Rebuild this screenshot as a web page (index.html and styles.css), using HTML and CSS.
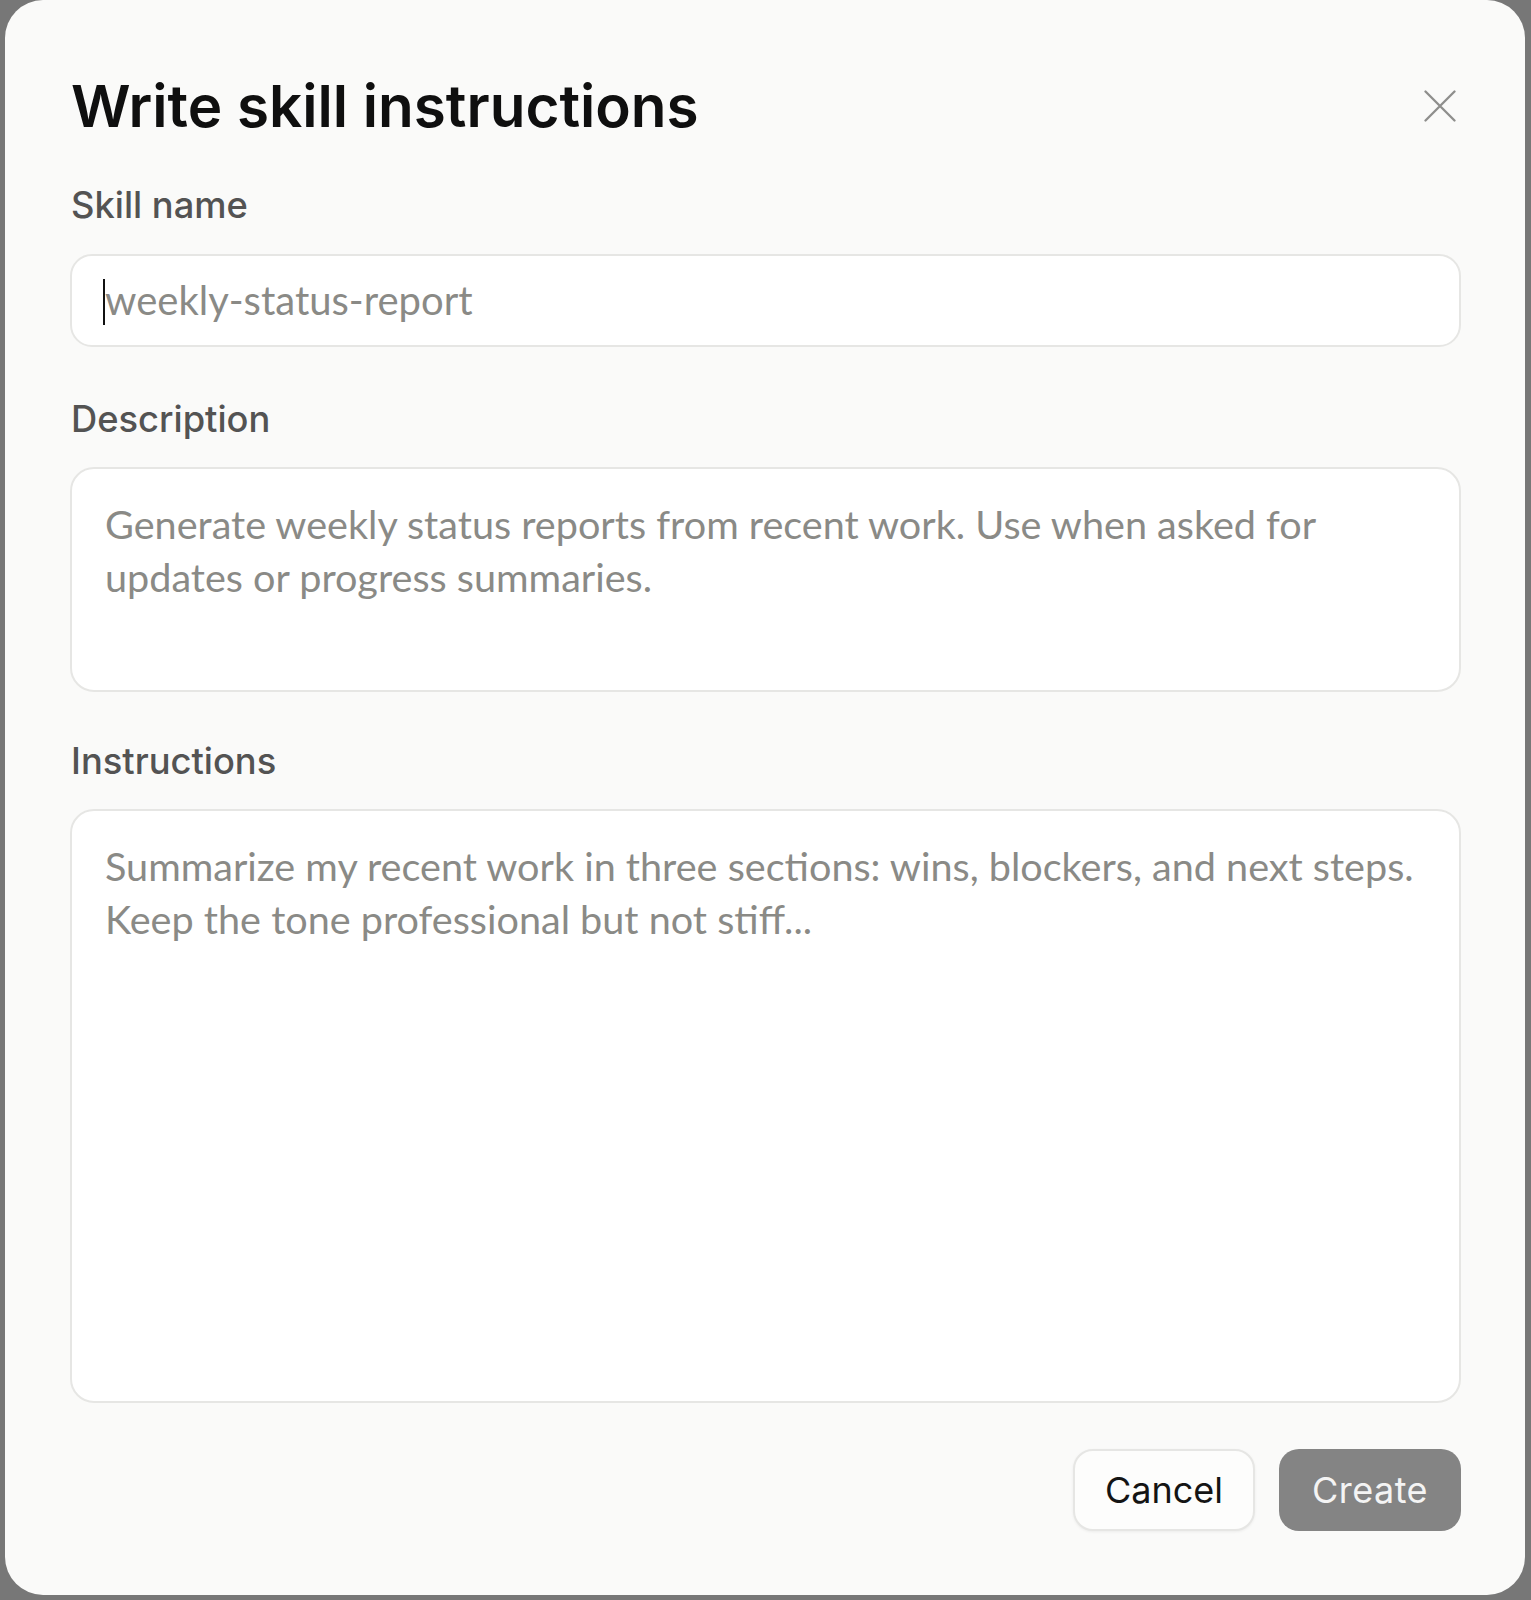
FILE: index.html
```html
<!DOCTYPE html>
<html>

<head>
    <meta charset="UTF-8">
    <title>Write skill instructions</title>
    <link rel="stylesheet" href="styles.css">
</head>

<body>
    <div class="dialog">
        <div class="dialog-head">
            <h1 class="dialog-title">Write skill instructions</h1>
            <button class="close-btn" type="button" aria-label="Close">
                <svg width="32" height="32" viewBox="0 0 32 32">
                    <path d="M1.5 1.5 L30.5 30.5 M30.5 1.5 L1.5 30.5" />
                </svg>
            </button>
        </div>

        <div class="field field-name">
            <label class="field-label" for="skill-name">Skill name</label>
            <div class="input-wrap">
                <input class="text-input" id="skill-name" type="text" placeholder="weekly-status-report">
                <span class="caret"></span>
            </div>
        </div>

        <div class="field field-desc">
            <label class="field-label" for="skill-desc">Description</label>
            <textarea class="text-area desc-area" id="skill-desc"
                placeholder="Generate weekly status reports from recent work. Use when asked for updates or progress summaries."></textarea>
        </div>

        <div class="field">
            <label class="field-label" for="skill-body">Instructions</label>
            <textarea class="text-area body-area" id="skill-body"
                placeholder="Summarize my recent work in three sections: wins, blockers, and next steps. Keep the tone professional but not stiff..."></textarea>
        </div>

        <div class="dialog-actions">
            <button class="btn btn-cancel" type="button">Cancel</button>
            <button class="btn btn-create" type="button">Create</button>
        </div>
    </div>
</body>

</html>
```

FILE: styles.css
```css
html,
body {
    margin: 0;
    height: 100%;
}

body {
    background-color: #777777;
    padding: 0 6px 5px 5px;
    box-sizing: border-box;
    font-family: "Inter", "Liberation Sans", sans-serif;
}

.dialog {
    height: 1595px;
    box-sizing: border-box;
    background-color: #fafaf9;
    border-radius: 38px;
    padding: 77px 64px 65px 65px;
    display: flex;
    flex-direction: column;
}

.dialog-head {
    display: flex;
    align-items: center;
    justify-content: space-between;
    margin-bottom: 52px;
}

.dialog-title {
    margin: 0;
    margin-left: 1px;
    font-size: 58.4px;
    line-height: 1;
    font-weight: 600;
    color: #0f0f0f;
}

.close-btn {
    width: 40px;
    height: 40px;
    margin-right: 1px;
    padding: 4px;
    border: none;
    background: none;
    display: flex;
    align-items: center;
    justify-content: center;
}

.close-btn svg {
    display: block;
    stroke: #8e8e8c;
    stroke-width: 2.3;
    stroke-linecap: round;
    fill: none;
}

.field {
    display: flex;
    flex-direction: column;
}

.field-name {
    margin-bottom: 54px;
}

.field-desc {
    margin-bottom: 51px;
}

.field-label {
    font-size: 36.3px;
    line-height: 1;
    font-weight: 500;
    color: #535353;
    margin-left: 1px;
    margin-bottom: 30px;
}

.input-wrap {
    position: relative;
}

.text-input,
.text-area {
    display: block;
    width: 100%;
    box-sizing: border-box;
    border: 2px solid #e6e6e4;
    background-color: #ffffff;
    font-family: "Lato", "Liberation Sans", sans-serif;
    font-size: 39.6px;
    color: #3a3a38;
    outline: none;
}

.text-input {
    height: 93px;
    border-radius: 22px;
    padding: 0 32px 0 33px;
    font-size: 40px;
}

.text-area {
    resize: none;
    border-radius: 24px;
    padding: 28px 16px 28px 33px;
    line-height: 53px;
}

.text-input::placeholder,
.text-area::placeholder {
    color: #8a8a86;
    opacity: 1;
}

.desc-area {
    height: 225px;
}

.body-area {
    height: 594px;
}

.caret {
    position: absolute;
    left: 33px;
    top: 25px;
    width: 2px;
    height: 46px;
    background-color: #111111;
}

.dialog-actions {
    display: flex;
    justify-content: flex-end;
    gap: 24px;
    margin-top: 46px;
}

.btn {
    width: 182px;
    height: 82px;
    box-sizing: border-box;
    border-radius: 20px;
    font-family: "Inter", "Liberation Sans", sans-serif;
    font-size: 36px;
    line-height: 1;
    padding: 0;
}

.btn-cancel {
    background-color: #fdfdfc;
    border: 2px solid #e6e6e4;
    color: #141414;
    box-shadow: 0 1px 3px rgba(0, 0, 0, 0.06);
}

.btn-create {
    background-color: #848484;
    border: none;
    color: #f4f4f4;
    letter-spacing: 0.5px;
}
```
